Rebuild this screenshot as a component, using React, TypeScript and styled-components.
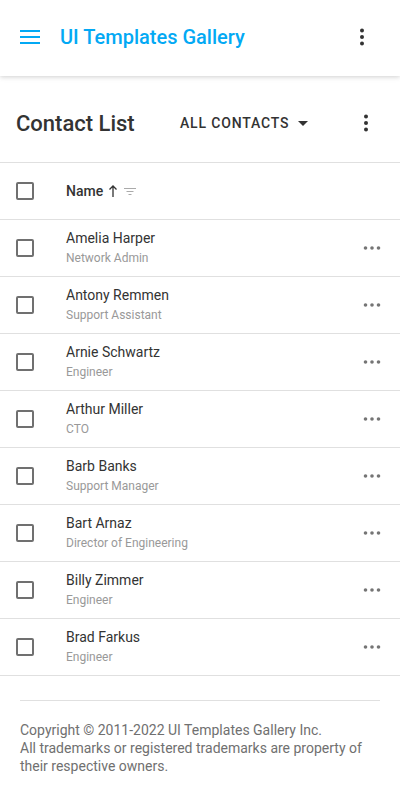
import React from "react";
import styled, { createGlobalStyle } from "styled-components";

const Global = createGlobalStyle`
  html, body { margin: 0; padding: 0; background: #fff; }
  body { font-family: Roboto, "Noto Sans", sans-serif; color: #333; -webkit-font-smoothing: antialiased; }
  * { box-sizing: border-box; }
`;

const Page = styled.div`
  width: 400px;
  min-height: 800px;
  display: flex;
  flex-direction: column;
  background: #fff;
`;

const Header = styled.header`
  height: 76px;
  display: flex;
  align-items: center;
  padding: 0 20px 2px 12px;
  box-shadow: 0 1px 4px rgba(0, 0, 0, 0.12), 0 2px 6px rgba(0, 0, 0, 0.06);
  position: relative;
  z-index: 1;
`;

const IconButton = styled.button<{ $color?: string }>`
  width: 36px;
  height: 36px;
  border: none;
  background: none;
  padding: 0;
  display: flex;
  align-items: center;
  justify-content: center;
  color: ${(p) => p.$color || "#333"};
  cursor: pointer;
`;

const Title = styled.h1`
  margin: 0 0 0 12px;
  font-size: 20px;
  font-weight: 500;
  color: #03a9f4;
  flex: 1;
`;

const Toolbar = styled.div`
  height: 87px;
  display: flex;
  align-items: center;
  padding: 8px 16px 0 16px;
  border-bottom: 1px solid #e0e0e0;
`;

const PageTitle = styled.h2`
  margin: 0;
  font-size: 22px;
  font-weight: 500;
  color: #333;
  width: 164px;
`;

const Dropdown = styled.button`
  border: none;
  background: none;
  padding: 0;
  display: flex;
  align-items: center;
  gap: 9px;
  font-family: inherit;
  font-size: 14px;
  font-weight: 500;
  letter-spacing: 0.06em;
  color: #333;
  flex: 1;
`;

const Table = styled.div`
  display: flex;
  flex-direction: column;
`;

const Row = styled.div`
  height: 57px;
  display: flex;
  align-items: center;
  padding: 0 18px 0 16px;
  border-bottom: 1px solid #e0e0e0;
`;

const Check = styled.span`
  width: 18px;
  height: 18px;
  border: 2px solid #707070;
  border-radius: 2px;
  flex-shrink: 0;
  margin-right: 32px;
`;

const HeadLabel = styled.div`
  display: flex;
  align-items: center;
  gap: 5px;
  font-size: 14px;
  font-weight: 500;
  color: #333;
`;

const Cell = styled.div`
  flex: 1;
  display: flex;
  flex-direction: column;
  gap: 4px;
`;

const Name = styled.div`
  font-size: 14px;
  color: #333;
  line-height: 17px;
`;

const Position = styled.div`
  font-size: 12px;
  color: #999;
  line-height: 15px;
`;

const Footer = styled.footer`
  margin: 24px 20px 0;
  padding-top: 20px;
  border-top: 1px solid #e0e0e0;
  font-size: 14px;
  line-height: 18px;
  color: #707070;
`;

const Kebab = () => (
  <svg width="24" height="24" viewBox="0 0 24 24" fill="currentColor">
    <circle cx="12" cy="5.5" r="2" />
    <circle cx="12" cy="12" r="2" />
    <circle cx="12" cy="18.5" r="2" />
  </svg>
);

const Dots = () => (
  <svg width="20" height="8" viewBox="0 0 20 8" fill="#757575">
    <circle cx="3.5" cy="4" r="1.8" />
    <circle cx="10" cy="4" r="1.8" />
    <circle cx="16.5" cy="4" r="1.8" />
  </svg>
);

const contacts = [
  ["Amelia Harper", "Network Admin"],
  ["Antony Remmen", "Support Assistant"],
  ["Arnie Schwartz", "Engineer"],
  ["Arthur Miller", "CTO"],
  ["Barb Banks", "Support Manager"],
  ["Bart Arnaz", "Director of Engineering"],
  ["Billy Zimmer", "Engineer"],
  ["Brad Farkus", "Engineer"],
];

export default function App() {
  return (
    <Page>
      <Global />
      <Header>
        <IconButton $color="#03a9f4">
          <svg width="20" height="14" viewBox="0 0 20 14" fill="currentColor">
            <rect x="0" y="0" width="20" height="2" />
            <rect x="0" y="6" width="20" height="2" />
            <rect x="0" y="12" width="20" height="2" />
          </svg>
        </IconButton>
        <Title>UI Templates Gallery</Title>
        <IconButton>
          <Kebab />
        </IconButton>
      </Header>
      <Toolbar>
        <PageTitle>Contact List</PageTitle>
        <Dropdown>
          ALL CONTACTS
          <svg width="10" height="5" viewBox="0 0 10 5" fill="#333">
            <path d="M0 0h10L5 5z" />
          </svg>
        </Dropdown>
        <IconButton>
          <Kebab />
        </IconButton>
      </Toolbar>
      <Table>
        <Row>
          <Check />
          <HeadLabel>
            Name
            <svg width="10" height="14" viewBox="0 0 10 14" fill="none" stroke="#333" strokeWidth="1.3">
              <path d="M5 13V2M1.5 5.5L5 2l3.5 3.5" />
            </svg>
            <svg width="14" height="10" viewBox="0 0 14 10" fill="none" stroke="#aaa" strokeWidth="1">
              <path d="M1 2.5h12M3.5 5.5h7M5.5 8.5h3" />
            </svg>
          </HeadLabel>
        </Row>
        {contacts.map(([n, p]) => (
          <Row key={n}>
            <Check />
            <Cell>
              <Name>{n}</Name>
              <Position>{p}</Position>
            </Cell>
            <Dots />
          </Row>
        ))}
      </Table>
      <Footer>
        Copyright © 2011-2022 UI Templates Gallery Inc.
        <br />
        All trademarks or registered trademarks are property of their respective owners.
      </Footer>
    </Page>
  );
}
